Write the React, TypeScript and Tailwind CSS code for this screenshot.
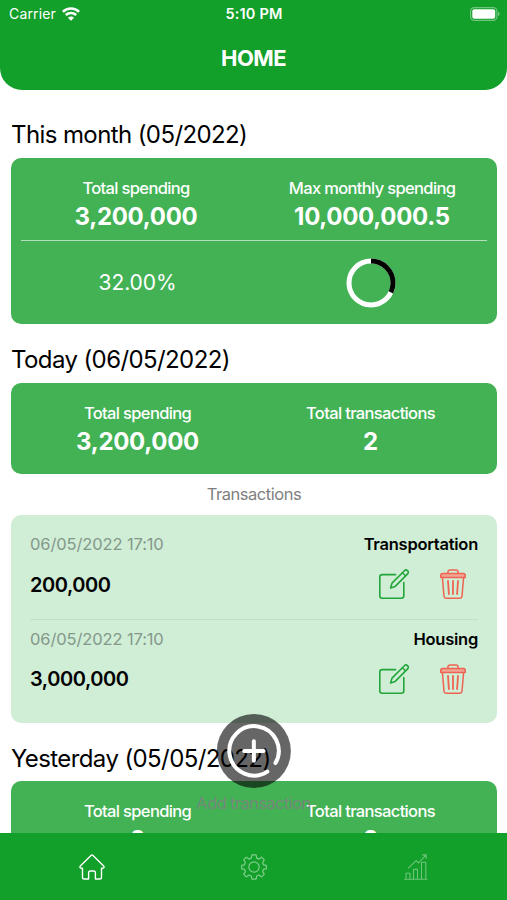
import type { ReactNode } from "react";
import clsx from "clsx";

type Transaction = {
  id: number;
  date: string;
  category: string;
  amount: string;
};

const TRANSACTIONS: Transaction[] = [
  { id: 1, date: "06/05/2022 17:10", category: "Transportation", amount: "200,000" },
  { id: 2, date: "06/05/2022 17:10", category: "Housing", amount: "3,000,000" },
];

// ── Icons ─────────────────────────────────────────────
function WifiIcon() {
  return (
    <svg width="18" height="14" viewBox="0 0 18 14" fill="none" stroke="white" strokeWidth="2.5">
      <path d="M0.9 4.9C5.4 0.4 12.6 0.4 17.1 4.9" />
      <path d="M3.8 8C6.7 5.2 11.3 5.2 14.2 8" />
      <path d="M9 13.8L5.9 10.7C7.6 9.1 10.4 9.1 12.1 10.7Z" fill="white" stroke="none" />
    </svg>
  );
}

function BatteryIcon() {
  return (
    <svg width="31" height="14" viewBox="0 0 31 14" fill="none">
      <rect x="0.6" y="0.6" width="26.3" height="12.8" rx="3.6" stroke="white" strokeOpacity="0.4" strokeWidth="1.2" />
      <rect x="2.3" y="2.3" width="22.9" height="9.4" rx="2" fill="white" />
      <path d="M28.2 4.8C29.9 5.4 29.9 8.6 28.2 9.2Z" fill="white" fillOpacity="0.5" />
    </svg>
  );
}

function EditIcon() {
  return (
    <svg width="30" height="30" viewBox="0 0 30 30" fill="none" stroke="#22a63a" strokeWidth="1.6" strokeLinejoin="round" strokeLinecap="round">
      <path d="M16.6 5.6H3.3A2.5 2.5 0 0 0 0.8 8.1V26.7A2.5 2.5 0 0 0 3.3 29.2H22.3A2.5 2.5 0 0 0 24.8 26.7V13.6" />
      <path d="M11.6 18.9L13 14.1L25.4 1.7A2.2 2.2 0 0 1 28.6 4.9L16.2 17.4Z" />
      <path d="M23.4 3.8L26.4 6.8" strokeWidth="1.3" />
    </svg>
  );
}

function TrashIcon() {
  return (
    <svg width="26" height="30" viewBox="0 0 26 30" fill="none" stroke="#ee6352" strokeWidth="1.5" strokeLinejoin="round" strokeLinecap="round">
      <path d="M2.4 8.6L4 27.3A2.1 2.1 0 0 0 6.1 29.2H19.9A2.1 2.1 0 0 0 22 27.3L23.6 8.6" />
      <path d="M2.6 4.4H23.4A1.8 1.8 0 0 1 25.2 6.2V8.5H0.8V6.2A1.8 1.8 0 0 1 2.6 4.4Z" fill="#f0a496" />
      <path d="M8 4.2V2.8A1.9 1.9 0 0 1 9.9 0.9H16.1A1.9 1.9 0 0 1 18 2.8V4.2" />
      <path d="M8 12L8.9 25M13 12V25M18 12L17.1 25" strokeWidth="1.8" />
    </svg>
  );
}

function HomeIcon() {
  return (
    <svg width="26" height="26" viewBox="0 0 26 26" fill="none" stroke="white" strokeWidth="1.4" strokeLinejoin="round" strokeLinecap="round">
      <path d="M12 1.5L1.3 12.1C0.4 13.1 1.1 14.3 2.2 14.3H3.5V23.2C3.5 24.3 4.2 25 5.3 25H9.6V18.8C9.6 17.7 10.3 17 11.4 17H14.6C15.7 17 16.4 17.7 16.4 18.8V25H20.7C21.8 25 22.5 24.3 22.5 23.2V14.3H23.8C24.9 14.3 25.6 13.1 24.7 12.1L14 1.5C13.4 0.9 12.6 0.9 12 1.5Z" />
    </svg>
  );
}

function GearIcon() {
  return (
    <svg width="26" height="26" viewBox="0 0 26 26" fill="none" stroke="#7fce88" strokeWidth="1.2" strokeLinejoin="round">
      <path d="M10.9 0.9H15.1L15.7 4.1L18 5.1L20.7 3.2L23.3 5.9L21.6 8.5L22.5 10.8L25.3 11.3V14.8L22.5 15.3L21.6 17.6L23.3 20.2L20.7 22.9L18 21L15.7 22L15.1 25.2H10.9L10.3 22L8 21L5.3 22.9L2.7 20.2L4.4 17.6L3.5 15.3L0.7 14.8V11.3L3.5 10.8L4.4 8.5L2.7 5.9L5.3 3.2L8 5.1L10.3 4.1Z" />
      <circle cx="13" cy="13" r="5.2" />
    </svg>
  );
}

function StatsIcon() {
  return (
    <svg width="24" height="26" viewBox="0 0 24 26" fill="none" stroke="#6cc578" strokeWidth="1.1" strokeLinejoin="round" strokeLinecap="round">
      <path d="M0.7 25.2H23" />
      <path d="M2 25V19.2H6V25M9.5 25V15.4H13.5V25M17.5 25V8.2H21.8V25" />
      <path d="M4.4 14.2L12.2 6.6L14.6 9L21.8 1.2M18.6 0.9H22.2V4.4" />
    </svg>
  );
}

function ProgressRing({ percent }: { percent: number }) {
  return (
    <svg width="50" height="50" viewBox="0 0 50 50" fill="none" strokeWidth="5">
      <circle cx="25" cy="25" r="22" stroke="white" />
      <circle
        cx="25"
        cy="25"
        r="22"
        stroke="black"
        pathLength={100}
        strokeDasharray={`${percent} 100`}
        transform="rotate(-90 25 25)"
      />
    </svg>
  );
}

// ── Building blocks ───────────────────────────────────
function Heading({ children, className }: { children: ReactNode; className?: string }) {
  return (
    <h2 className={clsx("h-9 text-2xl leading-[37px] tracking-[-0.6px] whitespace-nowrap text-black", className)}>
      {children}
    </h2>
  );
}

function Stat({ label, value }: { label: string; value: string }) {
  return (
    <div className="flex flex-col items-center whitespace-nowrap text-white">
      <span className="text-[16.5px] leading-6 font-medium tracking-[-0.65px]">{label}</span>
      <span className="text-2xl leading-[33px] font-bold tracking-[-0.3px]">{value}</span>
    </div>
  );
}

function TransactionRow({ item }: { item: Transaction }) {
  return (
    <li className="h-[93.5px] pt-[7px] not-first:border-t not-first:border-[#c2dfc8]">
      <div className="flex items-center justify-between leading-6">
        <span className="text-[16.5px] tracking-[-0.12px] text-[#83988a]">{item.date}</span>
        <span className="text-[16.5px] font-semibold tracking-[-0.25px] text-black">{item.category}</span>
      </div>
      <div className="mt-3 flex h-8 items-center justify-between">
        <span className="pt-px text-xl font-semibold tracking-[-0.45px] text-black">{item.amount}</span>
        <div className="flex gap-[31px] pr-3">
          <button aria-label="Edit">
            <EditIcon />
          </button>
          <button aria-label="Delete">
            <TrashIcon />
          </button>
        </div>
      </div>
    </li>
  );
}

function AddButton() {
  return (
    <button className="absolute top-[714px] left-1/2 flex -translate-x-1/2 flex-col items-center">
      <span className="flex size-[74px] items-center justify-center rounded-full bg-black/60">
        <svg width="56" height="56" viewBox="0 0 56 56" fill="none" stroke="white" strokeWidth="4" strokeLinecap="round">
          <path d="M41.5 48.6A24.7 24.7 0 1 1 49.6 40.1" />
          <path d="M18.3 28H37.7M28 18.3V37.7" />
        </svg>
      </span>
      <span className="mt-[3px] text-[16.5px] leading-6 tracking-[-0.6px] whitespace-nowrap text-[#808080]/85">
        Add transaction
      </span>
    </button>
  );
}

// ── App ───────────────────────────────────────────────
export default function App() {
  return (
    <div className="relative flex h-[900px] w-[507px] flex-col overflow-hidden bg-white font-['Inter','Liberation_Sans',sans-serif]">
      <header className="h-[90px] shrink-0 rounded-b-[22px] bg-[#129f2a] text-white">
        <div className="grid h-7 grid-cols-3 items-center pr-[6px] pl-[9px] text-sm">
          <div className="flex items-center gap-[6px]">
            <span className="tracking-[0.15px]">Carrier</span>
            <WifiIcon />
          </div>
          <span className="-ml-[2px] text-center text-[14.5px] font-semibold tracking-[0.2px]">5:10 PM</span>
          <div className="flex justify-end">
            <BatteryIcon />
          </div>
        </div>
        <h1 className="mt-[14px] text-center text-[22px] leading-8 font-bold tracking-[-0.6px]">HOME</h1>
      </header>

      <main className="min-h-0 flex-1 overflow-hidden pt-[26px] pr-[10px] pl-[11px]">
        <Heading>This month (05/2022)</Heading>
        <section className="mt-[6px] h-[166px] rounded-[10px] bg-[#42b255] px-[10px] pt-[18px]">
          <div className="-mx-[3px] grid grid-cols-2">
            <Stat label="Total spending" value="3,200,000" />
            <Stat label="Max monthly spending" value="10,000,000.5" />
          </div>
          <div className="mt-[7px] grid grid-cols-2 items-center border-t border-white/60 pt-[17px] text-center text-[21px] text-white">
            <span className="tracking-[-0.1px]">32.00%</span>
            <div className="flex justify-center">
              <ProgressRing percent={32} />
            </div>
          </div>
        </section>

        <Heading className="mt-[17px]">Today (06/05/2022)</Heading>
        <section className="mt-[6px] grid h-[91px] grid-cols-2 rounded-[10px] bg-[#42b255] px-[10px] pt-[18px]">
          <Stat label="Total spending" value="3,200,000" />
          <Stat label="Total transactions" value="2" />
        </section>

        <p className="mt-2 text-center text-[16.5px] leading-6 tracking-[-0.45px] text-[#808080]">Transactions</p>
        <ul className="mt-[9px] h-[208px] rounded-[10px] bg-[#d0edd6] px-[19px] pt-[10px]">
          {TRANSACTIONS.map((item) => (
            <TransactionRow key={item.id} item={item} />
          ))}
        </ul>

        <Heading className="mt-[17px]">Yesterday (05/05/2022)</Heading>
        <section className="mt-[5px] grid h-[91px] grid-cols-2 rounded-[10px] bg-[#42b255] px-[10px] pt-[18px]">
          <Stat label="Total spending" value="0" />
          <Stat label="Total transactions" value="0" />
        </section>
      </main>

      <nav className="grid h-[67px] shrink-0 grid-cols-3 items-center bg-[#129f2a] pr-[10px] pl-[11px]">
        <button className="flex justify-center" aria-label="Home">
          <HomeIcon />
        </button>
        <button className="flex justify-center" aria-label="Settings">
          <GearIcon />
        </button>
        <button className="flex justify-center" aria-label="Statistics">
          <StatsIcon />
        </button>
      </nav>

      <AddButton />
    </div>
  );
}
